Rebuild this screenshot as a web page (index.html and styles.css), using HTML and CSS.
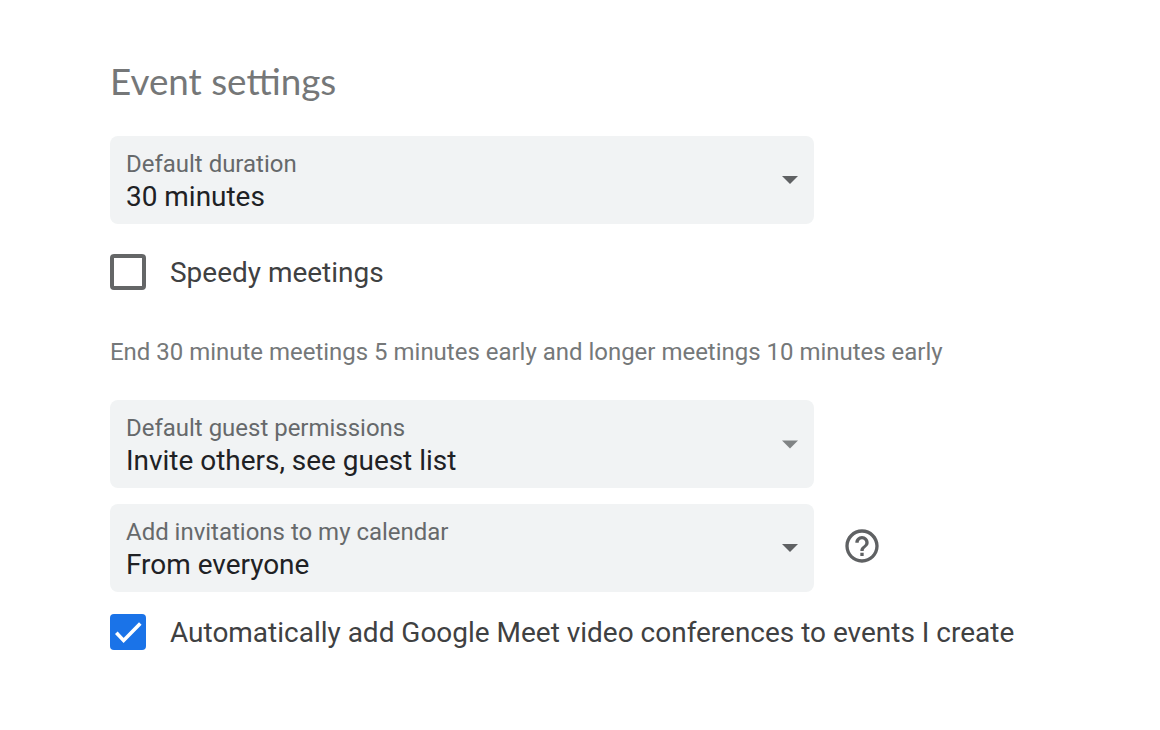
FILE: index.html
```html
<!DOCTYPE html>
<html lang="en">
<head>
    <meta charset="UTF-8">
    <meta name="viewport" content="width=device-width, initial-scale=1.0">
    <title>Event settings</title>
    <link rel="stylesheet" href="styles.css">
</head>
<body>
    <main class="settings">
        <h1 class="title">Event settings</h1>

        <div class="select">
            <div>
                <div class="label">Default duration</div>
                <div class="value">30 minutes</div>
            </div>
            <svg class="arrow" viewBox="0 0 16 8"><path d="M0 0h16L8 8z"/></svg>
        </div>

        <label class="check speedy">
            <span class="box"></span>
            <span>Speedy meetings</span>
        </label>

        <p class="hint">End 30 minute meetings 5 minutes early and longer meetings 10 minutes early</p>

        <div class="select">
            <div>
                <div class="label">Default guest permissions</div>
                <div class="value">Invite others, see guest list</div>
            </div>
            <svg class="arrow light" viewBox="0 0 16 8"><path d="M0 0h16L8 8z"/></svg>
        </div>

        <div class="row">
            <div class="select">
                <div>
                    <div class="label">Add invitations to my calendar</div>
                    <div class="value">From everyone</div>
                </div>
                <svg class="arrow" viewBox="0 0 16 8"><path d="M0 0h16L8 8z"/></svg>
            </div>
            <svg class="help" viewBox="0 0 24 24"><path d="M11 18h2v-2h-2v2zm1-16C6.48 2 2 6.48 2 12s4.48 10 10 10 10-4.48 10-10S17.52 2 12 2zm0 18c-4.41 0-8-3.59-8-8s3.59-8 8-8 8 3.59 8 8-3.59 8-8 8zm0-14c-2.21 0-4 1.79-4 4h2c0-1.1.9-2 2-2s2 .9 2 2c0 2-3 1.75-3 5h2c0-2.25 3-2.5 3-5 0-2.21-1.79-4-4-4z"/></svg>
        </div>

        <label class="check meet">
            <span class="box checked">
                <svg viewBox="0 0 36 36"><path d="M6.3 18.8l7.3 7.6L30.3 9.4"/></svg>
            </span>
            <span>Automatically add Google Meet video conferences to events I create</span>
        </label>
    </main>
</body>
</html>
```
FILE: styles.css
```css
* {
    box-sizing: border-box;
}

body {
    margin: 0;
    background: #fff;
    font-family: Roboto, sans-serif;
    color: #3f4142;
}

.settings {
    padding: 57px 0 0 110px;
}

.title {
    margin: 0 0 31px;
    font-family: Lato, sans-serif;
    font-size: 36.8px;
    font-weight: 400;
    line-height: 48px;
    color: #757778;
    white-space: nowrap;
}

.select {
    display: flex;
    justify-content: space-between;
    width: 704px;
    height: 88px;
    padding: 12px 16px 0;
    border-radius: 8px;
    background: #f1f3f4;
    white-space: nowrap;
}

.label {
    font-size: 23.97px;
    line-height: 32px;
    color: #66696b;
}

.value {
    font-size: 27.95px;
    line-height: 34px;
    color: #202124;
}

.arrow {
    width: 16px;
    height: 8px;
    margin-top: 28px;
    fill: #5f6163;
}

.arrow.light {
    height: 9px;
    fill: #808384;
}

.check {
    display: flex;
    align-items: center;
    gap: 24px;
    height: 36px;
    font-size: 27.97px;
    white-space: nowrap;
}

.speedy {
    margin-top: 30px;
}

.box {
    width: 36px;
    height: 36px;
    border: 4px solid #646667;
    border-radius: 4px;
}

.box.checked {
    border: 0;
    background: #1a73e8;
}

.box svg {
    display: block;
    fill: none;
    stroke: #fff;
    stroke-width: 3.6;
}

.hint {
    margin: 46px 0 32px;
    font-size: 23.97px;
    line-height: 32px;
    color: #757879;
    white-space: nowrap;
}

.row {
    display: flex;
    align-items: center;
    gap: 28px;
    margin-top: 16px;
}

.help {
    width: 40px;
    height: 40px;
    margin-bottom: 4px;
    fill: #5f6163;
}

.meet {
    margin-top: 22px;
}
```
